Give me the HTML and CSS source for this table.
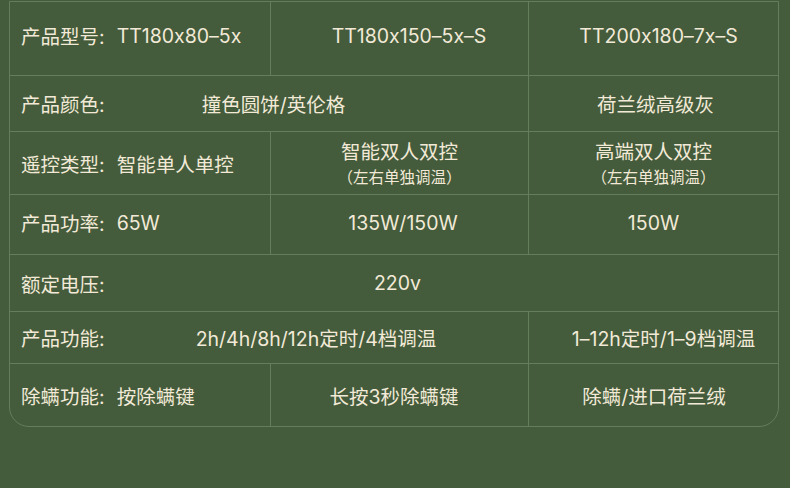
FILE: index.html
```html
<!DOCTYPE html>
<html lang="zh-CN">
<head>
<meta charset="utf-8">
<title>产品参数</title>
<link rel="stylesheet" href="styles.css">
</head>
<body>
<div class="spec">
  <div class="row r1">
    <div class="cell left">产品型号:<span class="val">TT180x80–5x</span></div>
    <div class="cell center c2">TT180x150–5x–S</div>
    <div class="cell center c3">TT200x180–7x–S</div>
  </div>
  <div class="row r2">
    <div class="cell merged span2"><span class="label">产品颜色:</span><span class="value v-color">撞色圆饼/英伦格</span></div>
    <div class="cell center c3a">荷兰绒高级灰</div>
  </div>
  <div class="row r3">
    <div class="cell left">遥控类型:<span class="val">智能单人单控</span></div>
    <div class="cell center stack"><span>智能双人双控</span><span class="sub">（左右单独调温）</span></div>
    <div class="cell center stack"><span>高端双人双控</span><span class="sub">（左右单独调温）</span></div>
  </div>
  <div class="row r4">
    <div class="cell left">产品功率:<span class="val">65W</span></div>
    <div class="cell center c2p">135W/150W</div>
    <div class="cell center c3p">150W</div>
  </div>
  <div class="row r5">
    <div class="cell merged span3"><span class="label">额定电压:</span><span class="value v-volt">220v</span></div>
  </div>
  <div class="row r6">
    <div class="cell merged span2"><span class="label">产品功能:</span><span class="value v-func">2h/4h/8h/12h定时/4档调温</span></div>
    <div class="cell center c3w">1–12h定时/1–9档调温</div>
  </div>
  <div class="row r7">
    <div class="cell left">除螨功能:<span class="val">按除螨键</span></div>
    <div class="cell center c2m">长按3秒除螨键</div>
    <div class="cell center c3m">除螨/进口荷兰绒</div>
  </div>
</div>
</body>
</html>
```
FILE: styles.css
```css
html, body {
  margin: 0;
  padding: 0;
  background: #445b3c;
  width: 790px;
  height: 488px;
  overflow: hidden;
}
body {
  font-family: "Inter", "Noto Sans CJK SC", sans-serif;
  font-feature-settings: "calt" 0;
  font-size: 19.5px;
  color: #f2ead7;
}
.spec {
  box-sizing: border-box;
  width: 770px;
  margin: 1px 0 0 9px;
  border: 1px solid #647d5a;
  border-radius: 0 0 20px 20px;
}
.row {
  box-sizing: border-box;
  display: grid;
  grid-template-columns: 261px 258px 1fr;
  border-bottom: 1px solid #647d5a;
}
.row:last-child { border-bottom: none; }
.r1 { height: 74px; }
.r2 { height: 56px; }
.r3 { height: 63px; }
.r4 { height: 60px; }
.r5 { height: 57px; }
.r6 { height: 52px; }
.r7 { height: 62px; }
.cell {
  border-right: 1px solid #647d5a;
  display: flex;
  align-items: center;
  white-space: nowrap;
}
.cell:last-child { border-right: none; }
.left { padding-left: 11px; }
.val { margin-left: 12px; }
.center { justify-content: center; }
.span2 { grid-column: span 2; }
.span3 { grid-column: span 3; }
.merged {
  display: grid;
  align-items: center;
}
.merged > span { grid-area: 1 / 1; }
.label { justify-self: start; padding-left: 11px; }
.value { justify-self: center; }
.v-color { margin-left: 9px; }
.v-volt { margin-left: 7px; }
.v-func { margin-left: 94px; }
.c2 { padding-left: 19px; }
.c3 { padding-left: 10px; }
.c3a { padding-left: 4px; }
.c2p { padding-left: 7px; }
.c3p { padding-left: 0; }
.c3w { padding-left: 20px; }
.c2m { padding-right: 11px; }
.c3m { padding-left: 1px; }
.r1 .cell { padding-bottom: 6px; }
.stack {
  flex-direction: column;
  line-height: 24px;
  padding-top: 3px;
}
.sub { font-size: 15.5px; line-height: 22px; margin-top: 3px; }
.r4 .cell { padding-bottom: 4px; }
```
